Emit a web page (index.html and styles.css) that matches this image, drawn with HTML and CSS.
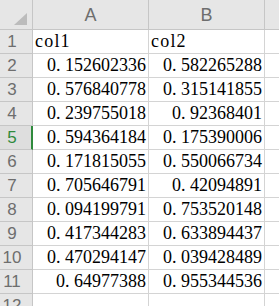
FILE: index.html
```html
<!DOCTYPE html>
<html>
<head>
<meta charset="utf-8">
<link rel="stylesheet" href="styles.css">
</head>
<body>
<div class="sheet">
  <div class="corner"><span class="tri"></span></div>
  <div class="colhead">A</div>
  <div class="colhead">B</div>
  <div class="colhead last"></div>

  <div class="rowhead">1</div>
  <div class="cell text">col1</div>
  <div class="cell text">col2</div>
  <div class="cell"></div>

  <div class="rowhead">2</div>
  <div class="cell num">0<span class="dot">.</span>152602336</div>
  <div class="cell num">0<span class="dot">.</span>582265288</div>
  <div class="cell"></div>

  <div class="rowhead">3</div>
  <div class="cell num">0<span class="dot">.</span>576840778</div>
  <div class="cell num">0<span class="dot">.</span>315141855</div>
  <div class="cell"></div>

  <div class="rowhead">4</div>
  <div class="cell num">0<span class="dot">.</span>239755018</div>
  <div class="cell num">0<span class="dot">.</span>92368401</div>
  <div class="cell"></div>

  <div class="rowhead active">5</div>
  <div class="cell num">0<span class="dot">.</span>594364184</div>
  <div class="cell num">0<span class="dot">.</span>175390006</div>
  <div class="cell"></div>

  <div class="rowhead">6</div>
  <div class="cell num">0<span class="dot">.</span>171815055</div>
  <div class="cell num">0<span class="dot">.</span>550066734</div>
  <div class="cell"></div>

  <div class="rowhead">7</div>
  <div class="cell num">0<span class="dot">.</span>705646791</div>
  <div class="cell num">0<span class="dot">.</span>42094891</div>
  <div class="cell"></div>

  <div class="rowhead">8</div>
  <div class="cell num">0<span class="dot">.</span>094199791</div>
  <div class="cell num">0<span class="dot">.</span>753520148</div>
  <div class="cell"></div>

  <div class="rowhead">9</div>
  <div class="cell num">0<span class="dot">.</span>417344283</div>
  <div class="cell num">0<span class="dot">.</span>633894437</div>
  <div class="cell"></div>

  <div class="rowhead">10</div>
  <div class="cell num">0<span class="dot">.</span>470294147</div>
  <div class="cell num">0<span class="dot">.</span>039428489</div>
  <div class="cell"></div>

  <div class="rowhead">11</div>
  <div class="cell num">0<span class="dot">.</span>64977388</div>
  <div class="cell num">0<span class="dot">.</span>955344536</div>
  <div class="cell"></div>

  <div class="rowhead">12</div>
  <div class="cell"></div>
  <div class="cell"></div>
  <div class="cell"></div>
</div>
</body>
</html>
```
FILE: styles.css
```css
html, body {
  margin: 0;
  padding: 0;
  background: #ffffff;
  overflow: hidden;
}

.sheet {
  display: grid;
  grid-template-columns: 33px 116px 116px 1fr;
  grid-template-rows: 30px repeat(12, 24px);
  width: 279px;
}

.corner,
.colhead,
.rowhead,
.cell {
  box-sizing: border-box;
  border-right: 1px solid #d4d4d4;
  border-bottom: 1px solid #d4d4d4;
}

.corner {
  position: relative;
  background: #e6e6e6;
  border-color: #c6c6c6;
}

.tri {
  position: absolute;
  right: 5px;
  bottom: 4px;
  width: 0;
  height: 0;
  border-left: 13px solid transparent;
  border-bottom: 12px solid #bcbcbc;
}

.colhead {
  background: #e6e6e6;
  border-color: #c6c6c6;
  color: #6e6e6e;
  font-family: "Liberation Sans", Arial, sans-serif;
  font-size: 18px;
  display: flex;
  justify-content: center;
  align-items: center;
  padding-top: 1px;
}

.colhead.last {
  border-right: none;
}

.rowhead {
  background: #e6e6e6;
  border-color: #c6c6c6;
  color: #6e6e6e;
  font-family: "Liberation Sans", Arial, sans-serif;
  font-size: 17px;
  display: flex;
  justify-content: center;
  align-items: center;
  padding-right: 8px;
  padding-top: 1px;
}

.rowhead.active {
  color: #2f8a3c;
  background: #dedede;
  border-right: 2px solid #2f8a3c;
  padding-right: 7px;
}

.cell {
  font-family: "Liberation Serif", "Times New Roman", serif;
  font-size: 18px;
  color: #000000;
  display: flex;
  align-items: flex-end;
  line-height: 18px;
  padding-bottom: 3px;
  white-space: nowrap;
  overflow: hidden;
}

.cell:nth-child(4n) {
  border-right: none;
}

.text {
  justify-content: flex-start;
  padding-left: 2px;
  letter-spacing: 1.2px;
}

.num {
  justify-content: flex-end;
  padding-right: 2px;
}

.dot {
  letter-spacing: 4.5px;
}
```
